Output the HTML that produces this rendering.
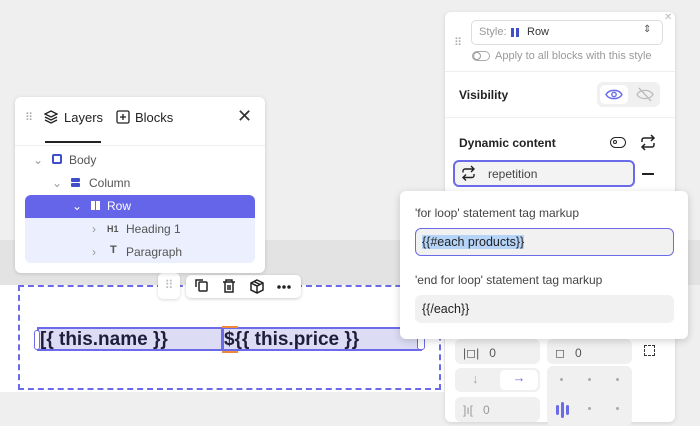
<!DOCTYPE html>
<html><head><style>
*{box-sizing:border-box;margin:0;padding:0}
body{width:700px;height:417px;overflow:hidden;position:relative;background:#efefef;font-family:"Liberation Sans",sans-serif;color:#222}
.abs{position:absolute}
.sm{font-size:12px;color:#333}
.dot{position:absolute;width:3px;height:3px;border-radius:50%;background:#aaa}
</style></head><body>
<div class="abs" style="left:0;top:240px;width:700px;height:45px;background:#e3e3e3"></div>
<div class="abs" style="left:0;top:285px;width:444px;height:107px;background:#fff"></div>
<div class="abs" style="left:18px;top:285px;width:423px;height:105px;border:2px dashed #6b6bea"></div>
<div class="abs" style="left:37px;top:327px;width:186px;height:24px;background:#dcdcf5;border:2px solid #6b6bea"></div>
<div class="abs" style="left:222px;top:327px;width:200px;height:24px;background:#dcdcf5;border:2px solid #6b6bea"></div>
<div class="abs" style="left:222px;top:326px;width:16px;height:27px;border-top:2px solid #f08a3a;border-bottom:2px solid #f08a3a"></div>
<div class="abs" style="left:34px;top:330px;width:6px;height:20px;border:1.5px solid #6b6bea;border-radius:3px;background:#fff"></div>
<div class="abs" style="left:417px;top:330px;width:8px;height:20px;border:1.5px solid #6b6bea;border-radius:3px;background:#fff"></div>
<div class="abs" style="left:40px;top:328px;font-size:19px;font-weight:bold;color:#1e1e3c;line-height:24px">[{ this.name }}</div>
<div class="abs" style="left:224px;top:328px;font-size:19px;font-weight:bold;color:#1e1e3c;line-height:24px">${{ this.price }}</div>
<div class="abs" style="left:158px;top:273px;width:22px;height:26px;background:#fff;border-radius:5px;box-shadow:0 1px 3px rgba(0,0,0,.15);color:#bbb;font-size:12px;text-align:center;line-height:24px">⠿</div>
<div class="abs" style="left:186px;top:275px;width:115px;height:23px;background:#fff;border-radius:5px;box-shadow:0 1px 3px rgba(0,0,0,.2)">
<svg width="115" height="23" fill="none" stroke="#222" stroke-width="1.5">
<rect x="13" y="7" width="8" height="9" rx="1"/><path d="M10 12V5h7"/>
<path d="M37 7h12M40 7V5h6v2M39 7v10h8V7M42 10v5M44 10v5"/>
<path d="M71 5l6 3v7l-6 3-6-3V8zM65 8l6 3 6-3M71 11v7M68 6.5l6 3"/>
<circle cx="93" cy="12" r="1" fill="#222"/><circle cx="98" cy="12" r="1" fill="#222"/><circle cx="103" cy="12" r="1" fill="#222"/>
</svg></div>
<div class="abs" style="left:15px;top:97px;width:250px;height:176px;background:#fff;border-radius:6px;box-shadow:0 1px 4px rgba(0,0,0,.15)">
<div class="abs" style="left:10px;top:14px;color:#aaa;font-size:11px">⠿</div>
<svg class="abs" style="left:29px;top:13px" width="14" height="14" fill="none" stroke="#222" stroke-width="1.3"><path d="M7 1l6 3-6 3-6-3zM1 7l6 3 6-3M1 10l6 3 6-3"/></svg>
<div class="abs" style="left:49px;top:13px;font-size:13px">Layers</div>
<div class="abs" style="left:30px;top:44px;width:56px;height:2px;background:#222"></div>
<svg class="abs" style="left:101px;top:13px" width="14" height="14" fill="none" stroke="#222" stroke-width="1.3"><rect x="1" y="1" width="12" height="12" rx="1.5"/><path d="M7 4v6M4 7h6"/></svg>
<div class="abs" style="left:120px;top:13px;font-size:13px">Blocks</div>
<div class="abs" style="left:222px;top:9px;font-size:18px;color:#333">✕</div>
<div class="abs" style="left:0;top:48px;width:250px;height:1px;background:#eee"></div>
<div class="abs" style="left:10px;top:98px;width:230px;height:68px;background:#eceffd;border-radius:6px"></div>
<div class="abs" style="left:10px;top:98px;width:230px;height:23px;background:#6565ea;border-radius:6px 6px 0 0"></div>
<div class="abs sm" style="left:18px;top:56px;color:#999">⌄</div>
<div class="abs" style="left:37px;top:57px;width:10px;height:10px;border:2px solid #3e4fc9;border-radius:2px"></div>
<div class="abs sm" style="left:54px;top:56px;color:#555">Body</div>
<div class="abs sm" style="left:37px;top:79px;color:#999">⌄</div>
<div class="abs" style="left:56px;top:81px;width:9px;height:4px;background:#3e4fc9;border-radius:1px"></div>
<div class="abs" style="left:56px;top:86px;width:9px;height:4px;background:#3e4fc9;border-radius:1px"></div>
<div class="abs sm" style="left:74px;top:79px;color:#555">Column</div>
<div class="abs sm" style="left:57px;top:102px;color:#fff">⌄</div>
<div class="abs" style="left:76px;top:104px;width:4px;height:9px;background:#fff"></div>
<div class="abs" style="left:81px;top:104px;width:4px;height:9px;background:#fff"></div>
<div class="abs sm" style="left:92px;top:102px;color:#fff">Row</div>
<div class="abs sm" style="left:77px;top:125px;color:#999">›</div>
<div class="abs" style="left:92px;top:127px;font-size:9px;font-weight:bold;color:#555">H1</div>
<div class="abs sm" style="left:111px;top:125px;color:#555">Heading 1</div>
<div class="abs sm" style="left:77px;top:148px;color:#999">›</div>
<div class="abs" style="left:95px;top:147px;font-size:11px;font-weight:bold;color:#555">T</div>
<div class="abs sm" style="left:111px;top:148px;color:#555">Paragraph</div>
</div>
<div class="abs" style="left:445px;top:12px;width:230px;height:410px;background:#fff;border-radius:6px;box-shadow:0 1px 4px rgba(0,0,0,.12)">
<div class="abs" style="left:219px;top:0;font-size:10px;color:#bbb">✕</div>
<div class="abs" style="left:9px;top:24px;color:#aaa;font-size:11px">⠿</div>
<div class="abs" style="left:26px;top:8px;width:192px;height:25px;border:1px solid #ddd;border-radius:5px"></div>
<div class="abs" style="left:34px;top:14px;font-size:11px;color:#999">Style:</div>
<div class="abs" style="left:66px;top:16px;width:3px;height:9px;background:#3e4fc9"></div>
<div class="abs" style="left:71px;top:16px;width:3px;height:9px;background:#3e4fc9"></div>
<div class="abs" style="left:82px;top:14px;font-size:11px;color:#333">Row</div>
<div class="abs" style="left:198px;top:12px;font-size:10px;color:#555">⇕</div>
<div class="abs" style="left:27px;top:39px;width:18px;height:10px;border:1px solid #aaa;border-radius:5px"><div style="width:8px;height:8px;background:#fff;border:1px solid #999;border-radius:50%"></div></div>
<div class="abs" style="left:50px;top:38px;font-size:11px;color:#999">Apply to all blocks with this style</div>
<div class="abs" style="left:0;top:59px;width:230px;height:1px;background:#eee"></div>
<div class="abs" style="left:14px;top:76px;font-size:12px;font-weight:bold">Visibility</div>
<div class="abs" style="left:152px;top:70px;width:63px;height:25px;background:#f0f0f0;border-radius:6px"></div>
<div class="abs" style="left:155px;top:73px;width:28px;height:19px;background:#fff;border-radius:5px"></div>
<svg class="abs" style="left:160px;top:76px" width="18" height="13" fill="none" stroke="#6b6bea" stroke-width="1.4"><path d="M1 6.5C4 1 14 1 17 6.5 14 12 4 12 1 6.5z"/><circle cx="9" cy="6.5" r="2.2"/></svg>
<svg class="abs" style="left:191px;top:75px" width="18" height="15" fill="none" stroke="#bbb" stroke-width="1.3"><path d="M1 7.5C4 2 14 2 17 7.5 14 13 4 13 1 7.5zM3 1l12 13"/></svg>
<div class="abs" style="left:0;top:105px;width:230px;height:1px;background:#eee"></div>
<div class="abs" style="left:14px;top:124px;font-size:12px;font-weight:bold">Dynamic content</div>
<div class="abs" style="left:165px;top:125px;width:16px;height:11px;border:1.5px solid #222;border-radius:6px"><div style="margin:2px;width:4px;height:4px;border:1.3px solid #222;border-radius:50%"></div></div>
<svg class="abs" style="left:195px;top:122px" width="16" height="17" fill="none" stroke="#222" stroke-width="1.5"><path d="M2 8V6a2 2 0 012-2h10M11 1l3 3-3 3M14 9v2a2 2 0 01-2 2H2M5 16l-3-3 3-3"/></svg>
<div class="abs" style="left:8px;top:148px;width:182px;height:27px;border:2px solid #6b6bea;border-radius:6px;background:#f3f3f3"></div>
<svg class="abs" style="left:16px;top:153px" width="15" height="16" fill="none" stroke="#222" stroke-width="1.4"><path d="M2 7.5V6a2 2 0 012-2h9M10 1l3 3-3 3M13 9v1.5a2 2 0 01-2 2H2M5 15.5l-3-3 3-3"/></svg>
<div class="abs" style="left:43px;top:155px;font-size:12px;color:#444">repetition</div>
<div class="abs" style="left:197px;top:161px;width:12px;height:1.5px;background:#222"></div>
<div class="abs" style="left:10px;top:327px;width:85px;height:25px;background:#f0f0f0;border-radius:6px;font-size:12px;color:#555;padding:7px 0 0 8px">|◻| &nbsp; 0</div>
<div class="abs" style="left:102px;top:327px;width:85px;height:25px;background:#f0f0f0;border-radius:6px;font-size:12px;color:#555;padding:7px 0 0 8px">◻ &nbsp; 0</div>
<div class="abs" style="left:199px;top:333px;width:11px;height:11px;border:1.5px dashed #333"></div>
<div class="abs" style="left:10px;top:356px;width:85px;height:24px;background:#f0f0f0;border-radius:6px"></div>
<div class="abs" style="left:55px;top:358px;width:38px;height:20px;background:#fff;border-radius:5px;color:#6b6bea;font-size:13px;text-align:center">→</div>
<div class="abs" style="left:27px;top:359px;color:#aaa;font-size:13px">↓</div>
<div class="abs" style="left:102px;top:354px;width:85px;height:60px;background:#f0f0f0;border-radius:6px">
<span class="dot" style="left:13px;top:12px"></span><span class="dot" style="left:41px;top:12px"></span><span class="dot" style="left:69px;top:12px"></span>
<span class="dot" style="left:41px;top:41px"></span><span class="dot" style="left:69px;top:41px"></span>
</div>
<div class="abs" style="left:111px;top:393px;width:3px;height:10px;background:#6b6bea;border-radius:2px"></div>
<div class="abs" style="left:116px;top:390px;width:3px;height:16px;background:#6b6bea;border-radius:2px"></div>
<div class="abs" style="left:121px;top:393px;width:3px;height:10px;background:#6b6bea;border-radius:2px"></div>
<div class="abs" style="left:10px;top:385px;width:85px;height:25px;background:#f0f0f0;border-radius:6px;font-size:12px;color:#999;padding:6px 0 0 8px">]ı[ &nbsp; 0</div>
</div>
<div class="abs" style="left:400px;top:191px;width:288px;height:148px;background:#fff;border-radius:6px;box-shadow:0 2px 8px rgba(0,0,0,.18)">
<div class="abs" style="left:15px;top:15px;font-size:12px;color:#444">'for loop' statement tag markup</div>
<div class="abs" style="left:15px;top:37px;width:259px;height:28px;border:1.5px solid #6b6bea;border-radius:6px;background:#f1f1f1"></div>
<div class="abs" style="left:22px;top:44px;font-size:12.5px;background:#b5d4f7;color:#222">{{#each products}}</div>
<div class="abs" style="left:15px;top:82px;font-size:12px;color:#444">'end for loop' statement tag markup</div>
<div class="abs" style="left:15px;top:104px;width:259px;height:28px;border-radius:6px;background:#f1f1f1"></div>
<div class="abs" style="left:22px;top:111px;font-size:12.5px;color:#222">{{/each}}</div>
</div>
</body></html>
